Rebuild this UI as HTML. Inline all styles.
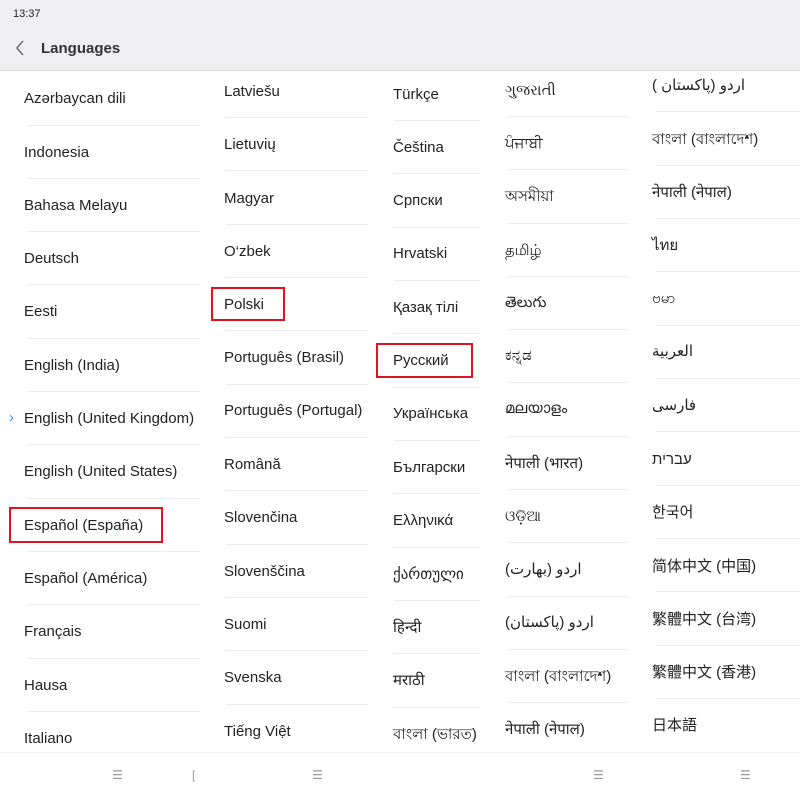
<!DOCTYPE html>
<html><head><meta charset="utf-8"><style>
body{margin:0;width:800px;height:800px;position:relative;overflow:hidden;background:#fff;font-family:"Liberation Sans","Noto Sans CJK SC","DejaVu Sans",sans-serif;color:#222}
.hd{position:absolute;left:0;top:0;width:800px;height:70px;background:#efeff1;border-bottom:1px solid #dcdcdf}
.t{position:absolute;font-size:15px;line-height:20px;white-space:nowrap;margin-top:1px}
.l{position:absolute;height:1px;background:#ececec}
.r{position:absolute;border:2px solid #e0141e}
.nav{position:absolute;left:0;top:752px;width:800px;height:48px;background:#fff;border-top:1px solid #f0f0f0}
.n{position:absolute;top:768px;font-size:12px;color:#999}
</style></head><body>
<div class="hd"></div>
<div class="t" style="left:13px;top:3px;font-size:11px;color:#222">13:37</div>
<svg style="position:absolute;left:14px;top:40px" width="12" height="16" viewBox="0 0 12 16"><path d="M9 1L3 8l6 7" fill="none" stroke="#555" stroke-width="1.3"/></svg>
<div class="t" style="left:41px;top:38px;font-weight:bold;font-size:15px;color:#333">Languages</div>

<!-- col1 -->
<div class="t" style="left:24px;top:88px">Azərbaycan dili</div>
<div class="t" style="left:24px;top:142px">Indonesia</div>
<div class="t" style="left:24px;top:195px">Bahasa Melayu</div>
<div class="t" style="left:24px;top:248px">Deutsch</div>
<div class="t" style="left:24px;top:301px">Eesti</div>
<div class="t" style="left:24px;top:355px">English (India)</div>
<div class="t" style="left:9px;top:407px;color:#2a8ee0">›</div>
<div class="t" style="left:24px;top:408px">English (United Kingdom)</div>
<div class="t" style="left:24px;top:461px">English (United States)</div>
<div class="t" style="left:24px;top:515px">Español (España)</div>
<div class="t" style="left:24px;top:568px">Español (América)</div>
<div class="t" style="left:24px;top:621px">Français</div>
<div class="t" style="left:24px;top:675px">Hausa</div>
<div class="t" style="left:24px;top:728px">Italiano</div>
<div class="l" style="left:28px;top:125px;width:172px"></div>
<div class="l" style="left:28px;top:178px;width:172px"></div>
<div class="l" style="left:28px;top:231px;width:172px"></div>
<div class="l" style="left:28px;top:284px;width:172px"></div>
<div class="l" style="left:28px;top:338px;width:172px"></div>
<div class="l" style="left:28px;top:391px;width:172px"></div>
<div class="l" style="left:28px;top:444px;width:172px"></div>
<div class="l" style="left:28px;top:498px;width:172px"></div>
<div class="l" style="left:28px;top:551px;width:172px"></div>
<div class="l" style="left:28px;top:604px;width:172px"></div>
<div class="l" style="left:28px;top:658px;width:172px"></div>
<div class="l" style="left:28px;top:711px;width:172px"></div>

<!-- col2 -->
<div class="t" style="left:224px;top:81px">Latviešu</div>
<div class="t" style="left:224px;top:134px">Lietuvių</div>
<div class="t" style="left:224px;top:188px">Magyar</div>
<div class="t" style="left:224px;top:241px">O‘zbek</div>
<div class="t" style="left:224px;top:294px">Polski</div>
<div class="t" style="left:224px;top:347px">Português (Brasil)</div>
<div class="t" style="left:224px;top:400px">Português (Portugal)</div>
<div class="t" style="left:224px;top:454px">Română</div>
<div class="t" style="left:224px;top:507px">Slovenčina</div>
<div class="t" style="left:224px;top:561px">Slovenščina</div>
<div class="t" style="left:224px;top:614px">Suomi</div>
<div class="t" style="left:224px;top:667px">Svenska</div>
<div class="t" style="left:224px;top:721px">Tiếng Việt</div>
<div class="l" style="left:226px;top:117px;width:142px"></div>
<div class="l" style="left:226px;top:170px;width:142px"></div>
<div class="l" style="left:226px;top:224px;width:142px"></div>
<div class="l" style="left:226px;top:277px;width:142px"></div>
<div class="l" style="left:226px;top:330px;width:142px"></div>
<div class="l" style="left:226px;top:384px;width:142px"></div>
<div class="l" style="left:226px;top:437px;width:142px"></div>
<div class="l" style="left:226px;top:490px;width:142px"></div>
<div class="l" style="left:226px;top:544px;width:142px"></div>
<div class="l" style="left:226px;top:597px;width:142px"></div>
<div class="l" style="left:226px;top:650px;width:142px"></div>
<div class="l" style="left:226px;top:704px;width:142px"></div>

<!-- col3 -->
<div class="t" style="left:393px;top:84px">Türkçe</div>
<div class="t" style="left:393px;top:137px">Čeština</div>
<div class="t" style="left:393px;top:190px">Српски</div>
<div class="t" style="left:393px;top:243px">Hrvatski</div>
<div class="t" style="left:393px;top:297px">Қазақ тілі</div>
<div class="t" style="left:393px;top:350px">Русский</div>
<div class="t" style="left:393px;top:403px">Українська</div>
<div class="t" style="left:393px;top:457px">Български</div>
<div class="t" style="left:393px;top:510px">Ελληνικά</div>
<div class="t" style="left:393px;top:564px">ქართული</div>
<div class="t" style="left:393px;top:617px">हिन्दी</div>
<div class="t" style="left:393px;top:670px">मराठी</div>
<div class="t" style="left:393px;top:724px">বাংলা (ভারত)</div>
<div class="l" style="left:394px;top:120px;width:86px"></div>
<div class="l" style="left:394px;top:173px;width:86px"></div>
<div class="l" style="left:394px;top:227px;width:86px"></div>
<div class="l" style="left:394px;top:280px;width:86px"></div>
<div class="l" style="left:394px;top:333px;width:86px"></div>
<div class="l" style="left:394px;top:387px;width:86px"></div>
<div class="l" style="left:394px;top:440px;width:86px"></div>
<div class="l" style="left:394px;top:493px;width:86px"></div>
<div class="l" style="left:394px;top:547px;width:86px"></div>
<div class="l" style="left:394px;top:600px;width:86px"></div>
<div class="l" style="left:394px;top:653px;width:86px"></div>
<div class="l" style="left:394px;top:707px;width:86px"></div>

<!-- col4 -->
<div class="t" style="left:505px;top:80px">ગુજરાતી</div>
<div class="t" style="left:505px;top:133px">ਪੰਜਾਬੀ</div>
<div class="t" style="left:505px;top:186px">অসমীয়া</div>
<div class="t" style="left:505px;top:240px">தமிழ்</div>
<div class="t" style="left:505px;top:292px">తెలుగు</div>
<div class="t" style="left:505px;top:345px">ಕನ್ನಡ</div>
<div class="t" style="left:505px;top:398px">മലയാളം</div>
<div class="t" style="left:505px;top:453px">नेपाली (भारत)</div>
<div class="t" style="left:505px;top:506px">ଓଡ଼ିଆ</div>
<div class="t" style="left:505px;top:559px">اردو (بھارت)</div>
<div class="t" style="left:505px;top:612px">اردو (پاکستان)</div>
<div class="t" style="left:505px;top:666px">বাংলা (বাংলাদেশ)</div>
<div class="t" style="left:505px;top:719px">नेपाली (नेपाल)</div>
<div class="l" style="left:508px;top:116px;width:120px"></div>
<div class="l" style="left:508px;top:169px;width:120px"></div>
<div class="l" style="left:508px;top:223px;width:120px"></div>
<div class="l" style="left:508px;top:276px;width:120px"></div>
<div class="l" style="left:508px;top:329px;width:120px"></div>
<div class="l" style="left:508px;top:382px;width:120px"></div>
<div class="l" style="left:508px;top:436px;width:120px"></div>
<div class="l" style="left:508px;top:489px;width:120px"></div>
<div class="l" style="left:508px;top:542px;width:120px"></div>
<div class="l" style="left:508px;top:596px;width:120px"></div>
<div class="l" style="left:508px;top:649px;width:120px"></div>
<div class="l" style="left:508px;top:702px;width:120px"></div>

<!-- col5 -->
<div class="t" style="left:652px;top:75px">اردو (پاکستان )</div>
<div class="t" style="left:652px;top:129px">বাংলা (বাংলাদেশ)</div>
<div class="t" style="left:652px;top:182px">नेपाली (नेपाल)</div>
<div class="t" style="left:652px;top:235px">ไทย</div>
<div class="t" style="left:652px;top:288px">ဗမာ</div>
<div class="t" style="left:652px;top:341px">العربية</div>
<div class="t" style="left:652px;top:395px">فارسی</div>
<div class="t" style="left:652px;top:449px">עברית</div>
<div class="t" style="left:652px;top:502px">한국어</div>
<div class="t" style="left:652px;top:556px">简体中文 (中国)</div>
<div class="t" style="left:652px;top:609px">繁體中文 (台湾)</div>
<div class="t" style="left:652px;top:662px">繁體中文 (香港)</div>
<div class="t" style="left:652px;top:715px">日本語</div>
<div class="l" style="left:656px;top:111px;width:144px"></div>
<div class="l" style="left:656px;top:165px;width:144px"></div>
<div class="l" style="left:656px;top:218px;width:144px"></div>
<div class="l" style="left:656px;top:271px;width:144px"></div>
<div class="l" style="left:656px;top:325px;width:144px"></div>
<div class="l" style="left:656px;top:378px;width:144px"></div>
<div class="l" style="left:656px;top:431px;width:144px"></div>
<div class="l" style="left:656px;top:485px;width:144px"></div>
<div class="l" style="left:656px;top:538px;width:144px"></div>
<div class="l" style="left:656px;top:591px;width:144px"></div>
<div class="l" style="left:656px;top:645px;width:144px"></div>
<div class="l" style="left:656px;top:698px;width:144px"></div>

<div class="r" style="left:9px;top:507px;width:150px;height:32px"></div>
<div class="r" style="left:211px;top:287px;width:70px;height:30px"></div>
<div class="r" style="left:376px;top:343px;width:93px;height:31px"></div>

<div class="nav"></div>
<div class="n" style="left:112px">☰</div>
<div class="n" style="left:192px">[</div>
<div class="n" style="left:312px">☰</div>
<div class="n" style="left:593px">☰</div>
<div class="n" style="left:740px">☰</div>
</body></html>
